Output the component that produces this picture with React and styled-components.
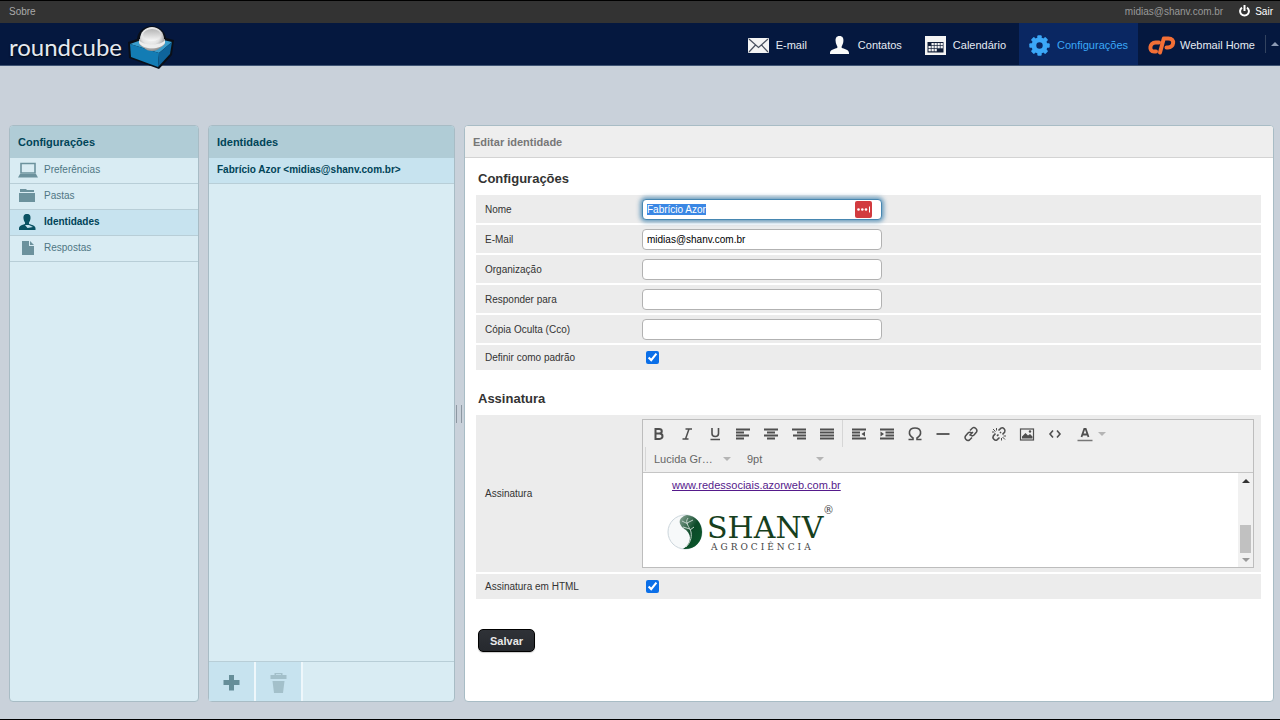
import { useEffect, useRef } from "react"
import styled, { createGlobalStyle } from "styled-components"

const colors = {
  pageBackground: "#c9d1da",
  topbar: "#333333",
  nav: "#05183f",
  navActive: "#0a2762",
  navActiveText: "#3ba7f7",
  panel: "#d9ecf3",
  panelHead: "#b0ccd6",
  panelActive: "#c7e3ef",
  panelBorder: "#a8bcc5",
  rowBorder: "#b8ced7",
  teal: "#004458",
  tealSoft: "#6c929d",
  tealText: "#4f7683",
  formRow: "#ececec",
  toolbar: "#efefef",
  toolIcon: "#4f4f4f",
}

const GlobalStyle = createGlobalStyle`
  * {
    box-sizing: border-box;
  }

  body {
    margin: 0;
    background: ${colors.pageBackground};
    font-family: "Liberation Sans", Arial, sans-serif;
    font-size: 10px;
    color: #333;
  }

  button,
  input,
  select {
    font-family: inherit;
  }

  a {
    text-decoration: none;
  }

  svg {
    display: block;
    flex: none;
  }
`

const Page = styled.div`
  display: flex;
  flex-direction: column;
  min-height: 100vh;
  border-top: 1px solid #000;
  border-bottom: 1px solid #000;
`

const Topbar = styled.header`
  display: flex;
  align-items: center;
  justify-content: space-between;
  height: 22px;
  padding: 0 7px 2px 9px;
  background: ${colors.topbar};
  color: #999;
`

const TopbarLink = styled.a`
  display: flex;
  align-items: center;
  gap: 5px;
  color: ${(props) => (props.$bright ? "#fff" : "#aaa")};
`

const UserArea = styled.div`
  display: flex;
  align-items: center;
  gap: 16px;
`

const Header = styled.div`
  display: flex;
  justify-content: space-between;
  height: 43px;
  padding-left: 9px;
  background: ${colors.nav};
  border-bottom: 1px solid #3f5474;
`

const Brand = styled.a`
  display: flex;
  align-items: flex-start;
  gap: 6px;
  height: 48px;
  padding-top: 3px;
`

const BrandName = styled.span`
  padding-top: 7px;
  font-family: Lato, sans-serif;
  font-size: 24px;
  line-height: 28px;
  color: #e4e9f1;
  text-shadow: 0 1px 2px #000;
`

const Nav = styled.nav`
  display: flex;
  font-size: 11px;
`

const NavItem = styled.a`
  display: flex;
  align-items: center;
  gap: ${(props) => (props.$wide ? 4 : 7)}px;
  padding: 2px 10px 0;
  margin-left: ${(props) => (props.$wide ? 0 : 3)}px;
  background: ${(props) => (props.$active ? colors.navActive : "transparent")};
  color: ${(props) => (props.$active ? colors.navActiveText : "#e6ebf3")};
`

const NavToggle = styled.button`
  display: flex;
  align-items: center;
  width: 15px;
  margin: 12px 0;
  padding: 0 0 0 5px;
  border: 0;
  border-left: 1px solid #33435f;
  background: none;
`

const Main = styled.main`
  flex: 1;
  display: grid;
  grid-template-columns: 190px 247px minmax(0, 1fr);
  column-gap: 9px;
  padding: 59px 6px 17px 9px;
`

const Panel = styled.section`
  position: relative;
  display: flex;
  flex-direction: column;
  border: 1px solid ${colors.panelBorder};
  border-radius: 4px;
  background: ${(props) => (props.$white ? "#fff" : colors.panel)};
`

const PanelTitle = styled.h2`
  margin: 0;
  padding: 1px 8px 0;
  border-radius: 3px 3px 0 0;
  border-bottom: 1px solid ${(props) => (props.$muted ? "#d3d3d3" : colors.panelHead)};
  background: ${(props) => (props.$muted ? "#eeeeee" : colors.panelHead)};
  color: ${(props) => (props.$muted ? "#777" : colors.teal)};
  font-size: 11px;
  line-height: 30px;
`

const List = styled.ul`
  flex: 1;
  margin: 0;
  padding: 0;
  list-style: none;
`

const ListLink = styled.a`
  display: flex;
  align-items: center;
  gap: 5px;
  height: 26px;
  padding: 0 8px 2px;
  border-bottom: 1px solid ${colors.rowBorder};
  background: ${(props) => (props.$active ? colors.panelActive : "transparent")};
  color: ${(props) => (props.$active ? colors.teal : colors.tealText)};
  font-weight: ${(props) => (props.$active ? "bold" : "normal")};
`

const ListFooter = styled.div`
  display: flex;
  height: 40px;
  border-top: 1px solid ${colors.rowBorder};
`

const FooterButton = styled.button`
  display: flex;
  align-items: center;
  justify-content: center;
  width: 47px;
  padding: 2px 0 0;
  border: 0;
  border-right: 2px solid #eef7fb;
  background: ${colors.panelActive};
  color: #668e99;

  &:disabled {
    color: #a3c0ca;
  }
`

const SplitHandle = styled.div`
  position: absolute;
  top: 50%;
  left: -9px;
  width: 6px;
  height: 18px;
  margin-top: -9px;
  border: solid #8d98a2;
  border-width: 0 1px;
`

const FormBody = styled.form`
  padding: 0 12px 0 11px;
`

const Fieldset = styled.div`
  margin-bottom: 8px;
`

const Legend = styled.h3`
  margin: 0;
  padding: 12px 2px 8px;
  font-size: 13px;
  line-height: 17px;
`

const Rows = styled.div`
  display: grid;
  gap: 2px;
`

const FormRow = styled.div`
  display: grid;
  grid-template-columns: 157px minmax(0, 1fr);
  align-items: center;
  min-height: ${(props) => (props.$short ? 25 : 28)}px;
  padding: 0 7px 0 9px;
  background: ${colors.formRow};
`

const InputBox = styled.div`
  position: relative;
  width: 240px;
`

const TextInput = styled.input`
  display: block;
  width: 100%;
  height: 21px;
  padding: 0 4px;
  border: 1px solid #b2b2b2;
  border-radius: 4px;
  background: #fff;
  color: #000;
  font-size: 10px;

  &:focus {
    outline: none;
    border-color: #4787b1;
    box-shadow: 0 0 4px 2px rgba(71, 135, 177, 0.8);
  }

  &::selection {
    background: #3a87e4;
    color: #fff;
  }
`

const FillBadge = styled.svg`
  position: absolute;
  top: 2px;
  right: 10px;
`

const CheckCell = styled.div`
  display: flex;
  align-items: center;
`

const Checkbox = styled.input`
  width: 13px;
  height: 13px;
  margin: 0 4px;
  accent-color: #0b6fe8;
`

const Editor = styled.div`
  margin: 4px 0;
  border: 1px solid #bdbdbd;
  background: #fff;
`

const Toolbar = styled.div`
  height: 53px;
  padding-left: 2px;
  border-bottom: 1px solid #c5c5c5;
  background: ${colors.toolbar};
`

const ToolRow = styled.div`
  display: flex;
`

const ToolGroup = styled.div`
  display: flex;
  padding: 0 1px 0 0;

  & + & {
    padding-left: 2px;
    border-left: 1px solid #d6d6d6;
  }
`

const ToolButton = styled.button`
  display: flex;
  align-items: center;
  justify-content: center;
  gap: 5px;
  width: ${(props) => (props.$split ? 44 : 28)}px;
  height: 27px;
  padding: 1px 0 0;
  border: 0;
  background: none;
  color: ${colors.toolIcon};
`

const FontRow = styled.div`
  display: flex;
  height: 24px;
  border-left: 1px solid #d6d6d6;
`

const SelectBox = styled.label`
  display: flex;
  align-items: center;
  justify-content: space-between;
  width: 93px;
  padding: 0 8px;
`

const Select = styled.select`
  width: 66px;
  padding: 0;
  border: 0;
  background: none;
  appearance: none;
  color: #666;
  font-size: 11px;
`

const EditArea = styled.div`
  display: flex;
  height: 94px;
`

const Signature = styled.div`
  flex: 1;
  overflow: hidden;
  padding: 5px 0 0 23px;
`

const SignatureLink = styled.a`
  display: block;
  width: max-content;
  padding-left: 6px;
  color: #551a8b;
  font-size: 11px;
  line-height: 14px;
  text-decoration: underline;
`

const SignatureLogo = styled.svg`
  margin-top: 9px;
`

const Scrollbar = styled.div`
  display: flex;
  flex-direction: column;
  align-items: center;
  justify-content: space-between;
  width: 15px;
  padding: 6px 0 5px;
  background: #f1f1f1;
`

const ScrollThumb = styled.div`
  width: 11px;
  height: 28px;
  margin: auto 0 5px;
  background: #c1c1c1;
`

const SaveButton = styled.button`
  height: 23px;
  margin: 22px 2px;
  padding: 0 11px;
  border: 1px solid #000;
  border-radius: 5px;
  background: linear-gradient(#2f3237, #26292e);
  box-shadow: 0 1px 1px #ccc;
  color: #e8e8e8;
  font-size: 11px;
  font-weight: bold;
`

const CubeLogo = () => (
  <svg width="46" height="44" viewBox="0 0 46 44">
    <defs>
      <radialGradient id="ball" cx="0.45" cy="0.35" r="0.65">
        <stop offset="0" stopColor="#ffffff" />
        <stop offset="0.6" stopColor="#e3e3e3" />
        <stop offset="1" stopColor="#8f8f8f" />
      </radialGradient>
      <linearGradient id="dip" x1="0" y1="0" x2="0" y2="1">
        <stop offset="0" stopColor="#b5b5b5" />
        <stop offset="1" stopColor="#f8f8f8" />
      </linearGradient>
    </defs>
    <path
      d="M0 16 L9 13 C10 4 17 0 24 0 C31 0 37 5 38 12 L46 14 L44 29 L31 43 L1 32 Z"
      fill="#0a0f18"
    />
    <path d="M2 18 L22 11 L44 16 L31 27 Z" fill="#3a9dcc" />
    <path d="M2 18 L31 27 L30 41 L3 31 Z" fill="#137cb4" />
    <path d="M31 27 L44 16 L42 28 L30 41 Z" fill="#0e649b" />
    <path d="M11 13 H37 V17 C35 25 13 25 11 17 Z" fill="#9a9a9a" />
    <circle cx="24" cy="13" r="12" fill="url(#ball)" />
    <path d="M11 14 C15 20 33 20 37 14 V17 C33 24 15 24 11 17 Z" fill="#ededed" />
    <ellipse cx="24" cy="9" rx="9" ry="6" fill="url(#dip)" />
  </svg>
)

const PowerIcon = () => (
  <svg width="11" height="12" viewBox="0 0 11 12" fill="none" stroke="#fff" strokeWidth="2">
    <path d="M3 2.6 A4.4 4.4 0 1 0 8 2.6 M5.5 0 V6" />
  </svg>
)

const MailIcon = () => (
  <svg width="21" height="15" viewBox="0 0 21 15">
    <rect width="21" height="15" rx="1" fill="#f4f4f4" />
    <path
      d="M1 1 L10.500 9.500 L20 1 M1 14 L7.500 7 M20 14 L13.500 7"
      fill="none"
      stroke="#4b5260"
      strokeWidth="1.200"
    />
  </svg>
)

const ContactIcon = () => (
  <svg width="21" height="18" viewBox="0 0 21 18" fill="#fafafa">
    <path d="M9.500 0 C12.700 0 13.600 2.300 13.400 5 C13.200 7.800 12.200 9.400 11.700 10.300 V12 C15 13 19 13.800 19 17 V18 H0 V17 C0 13.800 4 13 7.300 12 V10.300 C6.800 9.400 5.800 7.800 5.600 5 C5.400 2.300 6.300 0 9.500 0 Z" />
  </svg>
)

const CalendarIcon = () => (
  <svg width="21" height="19" viewBox="0 0 21 19">
    <rect width="21" height="19" fill="#f4f4f4" />
    <rect x="2.500" y="6" width="16" height="10.500" fill="#111e38" />
    <g fill="#f4f4f4">
      {[7, 10, 13].map((y) =>
        [3.5, 6.5, 9.5, 12.5, 15.5]
          .filter((x) => !(y === 7 && x < 6) && !(y === 13 && x > 12))
          .map((x) => <rect key={`${x}-${y}`} x={x} y={y} width="2.300" height="2.300" />)
      )}
    </g>
  </svg>
)

const GearIcon = () => (
  <svg width="21" height="21" viewBox="0 0 21 21">
    <g fill={colors.navActiveText}>
      {[0, 45, 90, 135].map((angle) => (
        <rect
          key={angle}
          x="8.300"
          y="0.300"
          width="4.400"
          height="20.400"
          rx="1"
          transform={`rotate(${angle} 10.5 10.5)`}
        />
      ))}
      <circle cx="10.500" cy="10.500" r="8" />
    </g>
    <circle cx="10.500" cy="10.500" r="3.200" fill={colors.navActive} />
  </svg>
)

const CpanelIcon = () => (
  <svg
    width="28"
    height="19"
    viewBox="0 0 28 19"
    fill="none"
    stroke="#f36f36"
    strokeWidth="4"
    strokeLinejoin="round"
    strokeLinecap="round"
  >
    <path d="M11 6.500 H7.500 C1.500 6.500 0.500 15.500 6 15.500 H8" />
    <path d="M12 16.500 L15.800 2.500 H20.500 C27.500 2.500 26 11.500 20 11.500 H18.500" />
  </svg>
)

const LaptopIcon = () => (
  <svg width="21" height="18" viewBox="0 0 21 18">
    <path d="M3 2.500 H17 V12 H3 Z" fill="none" stroke={colors.tealSoft} strokeWidth="1.600" />
    <path d="M2 13 H18 L20 16.500 H0 Z" fill={colors.tealSoft} />
  </svg>
)

const FolderIcon = () => (
  <svg width="21" height="18" viewBox="0 0 21 18" fill={colors.tealSoft}>
    <path d="M2 2 H8 L9 3 H16 V5 H2 Z" />
    <path d="M1 6 H17 V15 H1 Z" />
  </svg>
)

const PersonIcon = () => (
  <svg width="21" height="18" viewBox="0 0 21 18">
    <path
      d="M9 1 C12 1 12.800 3 12.500 5.500 C12.300 7.500 11.500 8.800 11 9.500 V11 C14 12 17.500 12.500 17.500 15.500 V17 H1 V15.500 C1 12.500 4.500 12 7 11 V9.500 C6.500 8.800 5.700 7.500 5.500 5.500 C5.200 3 6 1 9 1 Z"
      fill="#0a5263"
    />
    <path d="M7 12 L9.500 15 L15 14 L11 12 Z" fill="#c7e3ef" />
  </svg>
)

const FileIcon = () => (
  <svg width="21" height="18" viewBox="0 0 21 18" fill={colors.tealSoft}>
    <path d="M4 2 H11 V7 H16 V16 H4 Z" />
    <path d="M12 2 L16 6 H12 Z" />
  </svg>
)

const PlusIcon = () => (
  <svg width="17" height="17" viewBox="0 0 17 17" fill="currentColor">
    <path d="M6 1 H11 V6 H16.500 V11 H11 V16.500 H6 V11 H0.500 V6 H6 Z" />
  </svg>
)

const TrashIcon = () => (
  <svg width="17" height="20" viewBox="0 0 17 20" fill="currentColor">
    <path d="M0.500 2 H4.500 V0 H12.500 V2 H16.500 V6 H0.500 Z M6 1.200 V2 H11 V1.200 Z" fillRule="evenodd" />
    <path d="M2.500 8 H14.500 L13 20 H4 Z" />
  </svg>
)

const Caret = ({ up, color = "#b5b5b5" }) => (
  <svg width="8" height="4" viewBox="0 0 8 4" fill={color}>
    <path d={up ? "M4 0 L8 4 H0 Z" : "M0 0 H8 L4 4 Z"} />
  </svg>
)

const Glyph = ({ children }) => (
  <svg
    width="16"
    height="16"
    viewBox="0 0 16 16"
    fill="none"
    stroke="currentColor"
    strokeWidth="1.800"
  >
    {children}
  </svg>
)

const linkPath =
  "M6.500 9.500 L10 6 M7 4.500 L9.500 2 C11.500 0.500 15 3.500 13.500 6 L11 9 C10 10 8.500 10 7.500 9 M9 11.500 L6.500 14 C4 15.500 1 12.500 2.500 10 L5 7 C6 6 7.500 6 8.500 7"

const tools = [
  [
    {
      label: "Negrito",
      icon: (
        <path
          d="M4.500 3 H8 C11.700 3 11.700 7.600 8 7.600 H4.500 H8.500 C12.500 7.600 12.500 13 8.500 13 H4.500 Z"
          strokeWidth="2"
        />
      ),
    },
    {
      label: "Itálico",
      icon: <path d="M6.500 3 H13 M3.500 13 H9.500 M10 3 L6.500 13" strokeWidth="1.500" />,
    },
    {
      label: "Sublinhado",
      icon: <path d="M5 2 V7.500 C5 11.500 11.500 11.500 11.500 7.500 V2 M3.500 13.500 H13" strokeWidth="1.600" />,
    },
    { label: "Alinhar à esquerda", icon: <path d="M1 3.500 H15 M1 6.500 H9 M1 9.500 H14 M1 12.500 H9" /> },
    { label: "Centralizar", icon: <path d="M1 3.500 H15 M4 6.500 H12 M1 9.500 H15 M4 12.500 H12" /> },
    { label: "Alinhar à direita", icon: <path d="M1 3.500 H15 M6 6.500 H15 M2 9.500 H15 M6 12.500 H15" /> },
    { label: "Justificar", icon: <path d="M1 3.500 H15 M1 6.500 H15 M1 9.500 H15 M1 12.500 H15" /> },
  ],
  [
    {
      label: "Diminuir recuo",
      icon: (
        <>
          <path d="M1 3.500 H15 M1 6.500 H9 M1 9.500 H9 M1 12.500 H15" />
          <path d="M14 5.500 V10.500 L10.500 8 Z" fill="currentColor" stroke="none" />
        </>
      ),
    },
    {
      label: "Aumentar recuo",
      icon: (
        <>
          <path d="M1 3.500 H15 M6.500 6.500 H15 M6.500 9.500 H15 M1 12.500 H15" />
          <path d="M1.500 5.500 V10.500 L5 8 Z" fill="currentColor" stroke="none" />
        </>
      ),
    },
    {
      label: "Caractere especial",
      icon: (
        <path
          d="M1.500 13.500 H6 V12 C0.500 8.500 1.500 2 8 2 C14.500 2 15.500 8.500 10 12 V13.500 H14.500"
          strokeWidth="1.600"
        />
      ),
    },
    { label: "Linha horizontal", icon: <path d="M1.500 8 H14.500" /> },
    { label: "Inserir link", icon: <path d={linkPath} strokeWidth="1.500" /> },
    {
      label: "Remover link",
      icon: (
        <>
          <path
            d="M7.500 4.500 L10 2.200 C12 0.800 15 3.800 13.700 6 L11.500 8.500 M8.500 11.500 L6 13.800 C4 15.200 1 12.200 2.300 10 L4.500 7.500 M6 10 L7.500 8.500 M9 7 L10 6"
            strokeWidth="1.600"
          />
          <path d="M2 3 L4.500 5.500 M5.500 2 V4.500 M1 6 H3.500 M14 13.500 L11.500 11 M10.500 14.500 V12 M15 10 H12.500" strokeWidth="1" />
        </>
      ),
    },
    {
      label: "Inserir imagem",
      icon: (
        <>
          <rect x="1.500" y="3" width="13" height="11" strokeWidth="1.200" />
          <path d="M3 12.500 V10.500 L6.500 7 L9 9.500 L11 8 L13.500 10.500 V12.500 Z" fill="currentColor" stroke="none" />
          <circle cx="11" cy="5.500" r="1.200" fill="currentColor" stroke="none" />
        </>
      ),
    },
    { label: "Código-fonte", icon: <path d="M6 4.500 L3 8 L6 11.500 M10 4.500 L13 8 L10 11.500" strokeWidth="1.600" /> },
  ],
]

const folders = [
  { name: "Preferências", icon: <LaptopIcon /> },
  { name: "Pastas", icon: <FolderIcon /> },
  { name: "Identidades", icon: <PersonIcon />, active: true },
  { name: "Respostas", icon: <FileIcon /> },
]

const navItems = [
  { name: "E-mail", icon: <MailIcon /> },
  { name: "Contatos", icon: <ContactIcon /> },
  { name: "Calendário", icon: <CalendarIcon /> },
  { name: "Configurações", icon: <GearIcon />, active: true },
  { name: "Webmail Home", icon: <CpanelIcon />, wide: true },
]

const fields = [
  { id: "email", label: "E-Mail", value: "midias@shanv.com.br" },
  { id: "organization", label: "Organização" },
  { id: "reply-to", label: "Responder para" },
  { id: "bcc", label: "Cópia Oculta (Cco)" },
]

function SignatureEditor() {
  return (
    <Editor role="group" aria-labelledby="signature-label">
      <Toolbar>
        <ToolRow>
          {tools.map((group, index) => (
            <ToolGroup key={index}>
              {group.map((tool) => (
                <ToolButton key={tool.label} type="button" aria-label={tool.label}>
                  <Glyph>{tool.icon}</Glyph>
                </ToolButton>
              ))}
              {index === 1 && (
                <ToolButton $split type="button" aria-label="Cor do texto">
                  <Glyph>
                    <path d="M4.500 11 L7.300 3 H8.700 L11.500 11 M5.500 8.500 H10.500" />
                    <path d="M0.500 14.500 H15.500" strokeWidth="1.500" stroke="#777" />
                  </Glyph>
                  <Caret />
                </ToolButton>
              )}
            </ToolGroup>
          ))}
        </ToolRow>
        <FontRow>
          <SelectBox>
            <Select aria-label="Fonte">
              <option>Lucida Gr…</option>
            </Select>
            <Caret />
          </SelectBox>
          <SelectBox>
            <Select aria-label="Tamanho">
              <option>9pt</option>
            </Select>
            <Caret />
          </SelectBox>
        </FontRow>
      </Toolbar>
      <EditArea>
        <Signature>
          <SignatureLink href="#site">www.redessociais.azorweb.com.br</SignatureLink>
          <SignatureLogo width="172" height="52" viewBox="0 0 172 52">
            <defs>
              <linearGradient id="leaf" x1="0" y1="0" x2="1" y2="1">
                <stop offset="0" stopColor="#8fa89a" />
                <stop offset="0.500" stopColor="#0c4a28" />
                <stop offset="1" stopColor="#0a5a2c" />
              </linearGradient>
            </defs>
            <circle cx="19" cy="31" r="17" fill="#f7f9fa" stroke="#ccd6dc" />
            <path
              d="M21 14 C10 17 13 25 20 29 C27 35 24 44 17 48 C29 49 36 41 36 31 C36 22 30 15 21 14 Z"
              fill="url(#leaf)"
            />
            <path
              d="M22 17 C18 22 24 26 25 31 C26 37 24 42 20 46 M16 20 L22 23 M27 19 L21 22 M17 26 L24 28 M28 26 L24 29"
              fill="none"
              stroke="#c3d3cb"
            />
            <text x="41" y="37" fontFamily="DejaVu Serif, serif" fontSize="30" fill="#173f1d">
              SHANV
            </text>
            <text
              x="45"
              y="49"
              fontFamily="DejaVu Serif, serif"
              fontSize="9"
              letterSpacing="3"
              fill="#444"
            >
              AGROCIÊNCIA
            </text>
            <text x="157" y="13" fontFamily="DejaVu Serif, serif" fontSize="11" fill="#444">
              ®
            </text>
          </SignatureLogo>
        </Signature>
        <Scrollbar>
          <Caret up color="#333" />
          <ScrollThumb />
          <Caret color="#999" />
        </Scrollbar>
      </EditArea>
    </Editor>
  )
}

function App() {
  const nameRef = useRef(null)

  useEffect(() => {
    nameRef.current.focus()
    nameRef.current.select()
  }, [])

  return (
    <Page>
      <GlobalStyle />
      <Topbar>
        <TopbarLink href="#about">Sobre</TopbarLink>
        <UserArea>
          <span>midias@shanv.com.br</span>
          <TopbarLink $bright href="#logout">
            <PowerIcon />
            Sair
          </TopbarLink>
        </UserArea>
      </Topbar>
      <Header>
        <Brand href="#home">
          <BrandName>roundcube</BrandName>
          <CubeLogo />
        </Brand>
        <Nav>
          {navItems.map((item) => (
            <NavItem key={item.name} href="#task" $active={item.active} $wide={item.wide}>
              {item.icon}
              {item.name}
            </NavItem>
          ))}
          <NavToggle type="button" aria-label="Recolher menu">
            <Caret up color="#8d9bb5" />
          </NavToggle>
        </Nav>
      </Header>

      <Main>
        <Panel>
          <PanelTitle>Configurações</PanelTitle>
          <List>
            {folders.map((folder) => (
              <li key={folder.name}>
                <ListLink href="#section" $active={folder.active}>
                  {folder.icon}
                  {folder.name}
                </ListLink>
              </li>
            ))}
          </List>
        </Panel>

        <Panel>
          <PanelTitle>Identidades</PanelTitle>
          <List>
            <li>
              <ListLink href="#identity" $active>
                Fabrício Azor &lt;midias@shanv.com.br&gt;
              </ListLink>
            </li>
          </List>
          <ListFooter>
            <FooterButton type="button" aria-label="Adicionar">
              <PlusIcon />
            </FooterButton>
            <FooterButton type="button" aria-label="Excluir" disabled>
              <TrashIcon />
            </FooterButton>
          </ListFooter>
        </Panel>

        <Panel $white>
          <SplitHandle />
          <PanelTitle $muted>Editar identidade</PanelTitle>
          <FormBody>
            <Fieldset>
              <Legend>Configurações</Legend>
              <Rows>
                <FormRow>
                  <label htmlFor="name">Nome</label>
                  <InputBox>
                    <TextInput ref={nameRef} id="name" defaultValue="Fabrício Azor" />
                    <FillBadge width="17" height="17" viewBox="0 0 17 17">
                      <rect width="17" height="17" rx="2" fill="#d23b3f" />
                      <g fill="#fff">
                        <circle cx="3.500" cy="8.500" r="1.300" />
                        <circle cx="7.300" cy="8.500" r="1.300" />
                        <circle cx="11" cy="8.500" r="1.300" />
                        <rect x="14" y="5.500" width="1" height="6" />
                      </g>
                    </FillBadge>
                  </InputBox>
                </FormRow>
                {fields.map((field) => (
                  <FormRow key={field.id}>
                    <label htmlFor={field.id}>{field.label}</label>
                    <InputBox>
                      <TextInput id={field.id} defaultValue={field.value} />
                    </InputBox>
                  </FormRow>
                ))}
                <FormRow $short>
                  <label htmlFor="standard">Definir como padrão</label>
                  <CheckCell>
                    <Checkbox type="checkbox" id="standard" defaultChecked />
                  </CheckCell>
                </FormRow>
              </Rows>
            </Fieldset>

            <Fieldset>
              <Legend>Assinatura</Legend>
              <Rows>
                <FormRow>
                  <span id="signature-label">Assinatura</span>
                  <SignatureEditor />
                </FormRow>
                <FormRow $short>
                  <label htmlFor="html-signature">Assinatura em HTML</label>
                  <CheckCell>
                    <Checkbox type="checkbox" id="html-signature" defaultChecked />
                  </CheckCell>
                </FormRow>
              </Rows>
            </Fieldset>
            <SaveButton type="button">Salvar</SaveButton>
          </FormBody>
        </Panel>
      </Main>
    </Page>
  )
}

export default App
